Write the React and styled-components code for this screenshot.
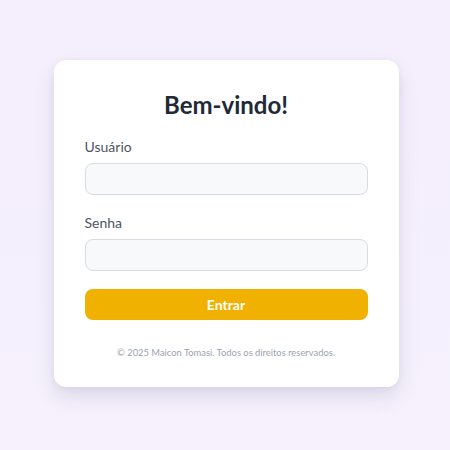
import React from 'react';
import styled, { createGlobalStyle } from 'styled-components';

const GlobalStyle = createGlobalStyle`
  * { box-sizing: border-box; }
  body {
    margin: 0;
    font-family: Lato, "Open Sans", sans-serif;
    background: #f5effd;
  }
`;

const Page = styled.div`
  width: 450px;
  height: 450px;
  padding-bottom: 3px;
  display: flex;
  justify-content: center;
  align-items: center;
  background: linear-gradient(180deg, #f4eefd 0%, #f6f1fd 100%);
`;

const Card = styled.form`
  width: 345px;
  margin-left: 2px;
  background: #ffffff;
  border-radius: 12px;
  padding: 30px 31px 28px;
  box-shadow: 0 10px 20px rgba(60, 50, 90, 0.12), 0 2px 6px rgba(60, 50, 90, 0.06);
`;

const Title = styled.h1`
  margin: 0 0 18px;
  text-align: center;
  font-size: 24px;
  line-height: 30px;
  font-weight: 700;
  color: #1f2937;
`;

const Field = styled.div`
  display: flex;
  flex-direction: column;
  margin-bottom: ${(p) => p.gap || 18}px;
`;

const Label = styled.label`
  font-size: 14px;
  line-height: 18px;
  color: #4b5563;
  margin-bottom: 7px;
`;

const Input = styled.input`
  height: 32px;
  border: 1px solid #d8dbe2;
  border-radius: 8px;
  background: #f8f9fb;
  padding: 0 10px;
  font-size: 14px;
  outline: none;
`;

const Button = styled.button`
  width: 100%;
  height: 31px;
  border: none;
  border-radius: 8px;
  background: #f0b100;
  color: #ffffff;
  font-family: Lato, sans-serif;
  font-size: 14px;
  font-weight: 700;
  cursor: pointer;
`;

const Footer = styled.p`
  margin: 26px 0 0;
  text-align: center;
  font-size: 9.4px;
  line-height: 13px;
  color: #9ca3af;
`;

const App = () => {
  return (
    <>
      <GlobalStyle />
      <Page>
        <Card onSubmit={(e) => e.preventDefault()}>
          <Title>Bem-vindo!</Title>
          <Field gap={19}>
            <Label>Usuário</Label>
            <Input type="text" />
          </Field>
          <Field gap={18}>
            <Label>Senha</Label>
            <Input type="password" />
          </Field>
          <Button type="submit">Entrar</Button>
          <Footer>© 2025 Maicon Tomasi. Todos os direitos reservados.</Footer>
        </Card>
      </Page>
    </>
  );
};

export default App;
